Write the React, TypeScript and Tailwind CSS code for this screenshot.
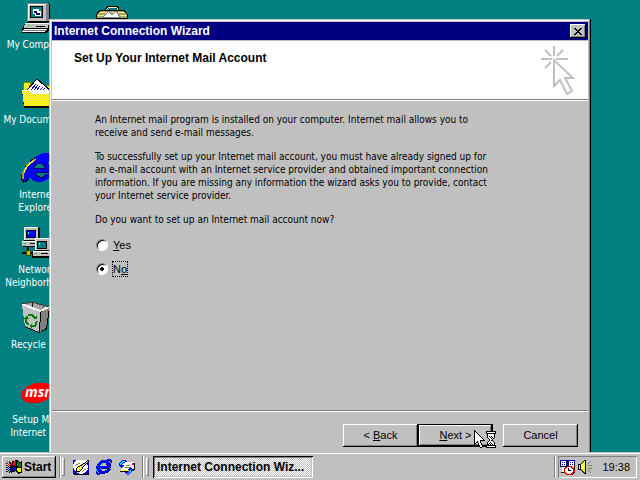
import { useState, type ReactNode } from 'react';
import { clsx } from 'clsx';

const COLORS: Record<string, string> = {
    K: '#000000',
    W: '#ffffff',
    L: '#c0c0c0',
    D: '#808080',
    R: '#ff0000',
    G: '#008000',
    B: '#0000ff',
    N: '#000080',
    Y: '#ffff00',
    O: '#808000',
    C: '#00ffff',
    T: '#008080',
};

// Each character is one pixel, a dot is transparent
function Sprite({ rows, className }: { rows: string[]; className?: string }) {
    return (
        <svg
            width={rows[0].length}
            height={rows.length}
            viewBox={`0 0 ${rows[0].length} ${rows.length}`}
            shapeRendering="crispEdges"
            className={clsx('shrink-0', className)}
            aria-hidden="true"
        >
            {rows.flatMap((row, y) =>
                [...row].map((c, x) =>
                    COLORS[c] ? <rect key={`${x}-${y}`} x={x} y={y} width="1" height="1" fill={COLORS[c]} /> : null
                )
            )}
        </svg>
    );
}

const FLAG = [
    '.........KKK....',
    '.R.R..KKRRKKK..K',
    '...KR.KRRRKGGKKK',
    'KR.RKRKRRRKGGGGK',
    '..R.RRKRRRKGGGGK',
    'KR.RKRKRRKKGGGGK',
    '..K.KKKKKKKKGGGK',
    'KB.BKBKBBBKKKKKK',
    '..B.BBKBBBKYYYYK',
    'KB.BKBKBBBKYYYYK',
    '..K.BBKBBKKYYYYK',
    'KB.BKKKKK.KKYYYK',
    '...K.K.....KKKKK',
    '............KK..',
];

const POINTER = [
    'K.......................',
    'KK..........KKKKKKKKKK..',
    'KWK.........KWWWWWWWWK..',
    'KWWK........KKKKKKKKKK..',
    'KWWWK........KWWWWWWK...',
    'KWWWWK.......KWWWWWWK...',
    'KWWWWWK......KWKWKWWK...',
    'KWWWWWWK.....KWWKWKWK...',
    'KWWWWWWWK.....KWWKWK....',
    'KWWWWWWWWK.....KWWK.....',
    'KWWWWWKKKKK....KWKK.....',
    'KWWKWWK.......KWWWWK....',
    'KWKKWWK......KWWKWWWK...',
    'KK..KWWK.....KWKWKWWK...',
    'K...KWWK.....KKWKWKWK...',
    '.....KWWK...KKKKKKKKKK..',
    '.....KWWK...KWWWWWWWWK..',
    '......KK....KKKKKKKKKK..',
];

const CLOSE = [
    'KK....KK',
    '.KK..KK.',
    '..KKKK..',
    '...KK...',
    '..KKKK..',
    '.KK..KK.',
    'KK....KK',
];

const SKETCH = [
    'BBBWWWWWWWWWWWKK',
    'BBWWWWWWWWWWWKYK',
    'BWWWWWWWWWWWKYKB',
    'BWWWWDDWWWKKLKBB',
    'WWWDDWWWDKLLKWBB',
    'WWDWWWWKKLLKWWWB',
    'WWWWWKKYYLKWWWWB',
    'WWWWKYYWYKWWWWWB',
    'BWWKYYWYYKWWWWDB',
    'BWWKYWYYKWWDDWWB',
    'BBWKYYYKWWDWWWBB',
    'NBBKKKKWWDWWWBBB',
    'NNBBWWWWWWWWBBBN',
    'NNNBBBWWWWBBBBNN',
    '.KKKKKKKKKKKKKKK',
];

const SMALL_E = [
    '...........BBBB.',
    '.....BBBBBBBNNBB',
    '....BBBBBBBBB.NB',
    '...BBBBNNBBBBB.B',
    '..BBBBC...BBBBB.',
    '.BBBBC....NBBBN.',
    '.BBBC......BBBB.',
    'BBBBBBBBBBBBBBB.',
    'BBBBBBBBBBBBBBN.',
    'BBBBCNNNNNNNNN..',
    'CBBBB......BBBN.',
    'CBBBBN...NBBBB..',
    'BCNBBBBBBBBBN...',
    'BB.NBBBBBBNN....',
    'BBBBBNNNN.......',
    '.BBB............',
];

const MAIL = [
    '...BBBB.........',
    '..BCCCBB........',
    '.BCCBBWWWWWWWWW.',
    'BCCBLWWWWWWWWRRK',
    'BCB.WWWWWWWWWRRK',
    'BBBBBWWDDDDWWWWK',
    '.BBB.WWWWWWWWWWK',
    '.LB.WWDDDDDBWWWK',
    '.LWWWWWWWWBBBWYK',
    '.LYWWWWWWBBBBBKK',
    '.LWYWYWYWYBCBBK.',
    '.KKKKKKKKBCCB...',
    '......BBBBCB....',
    '.......BCCB.....',
    '........BB......',
];

const SCHEDULE = [
    'NNNNNNNKNNNNNNN.',
    'NWWWWWNKNWWWWWN.',
    'NWNWNWNKNWNWNWN.',
    'NWWWWWNKNWWWWWK.',
    'NWNWNWNKNWNWNWK.',
    'NWWWWWNKKWWWWWK.',
    'NNNNNNKRRRRKWWK.',
    '.LWWWRRWWWWRRWK.',
    '.LWWRRWWKWWWRRK.',
    '.LWWRWWWKWWWWRK.',
    '.LWWRWWWKKKWWRR.',
    '.LWWRWWWWWWWWRR.',
    '.KKKRRWWWWWWRRK.',
    '.....RRWWWWRRK..',
    '......RRRRRRK...',
];

const SPEAKER = [
    '......KK......',
    '.....KYK....D.',
    '....KYYK...D..',
    '...KYWYK..D...',
    'KKKYWYYK......',
    'KYKWYYYK..DDDD',
    'KWKYYWYK......',
    'KYKYWYYK......',
    'KWKWYYYK..DDDD',
    'KKKOYYYK......',
    '...KOYYK..D...',
    '....KOYK...D..',
    '.....KOK....D.',
    '......KK......',
];

function Glyph({ children }: { children: ReactNode }) {
    return (
        <svg width="32" height="32" viewBox="0 0 32 32" shapeRendering="crispEdges" aria-hidden="true">
            {children}
        </svg>
    );
}

const computer = (
    <Glyph>
        <path d="M6 1h21l2 2v16l-2 2H6z" fill="#000" />
        <path d="M6 1h21v1H7v18H6z" fill="#808080" />
        <path d="M7 2h18v17H7z" fill="#c0c0c0" />
        <path d="M7 2h18v1H8v16H7z" fill="#fff" />
        <path d="M25 2h3v17h-3z" fill="#808080" />
        <path d="M9 4h13v12H9z" fill="#000" />
        <path d="M10 5h11v10H10z" fill="#008080" />
        <path d="M12 7h6v5h-6zM14 9h6v5h-6z" fill="#fff" />
        <path d="M13 9h3v2h-3zM15 11h4v2h-4z" fill="#000080" />
        <path d="M4 21h25v6l-4 4H1v-4z" fill="#000" />
        <path d="M4 21h24l-1 5H3z" fill="#c0c0c0" />
        <path d="M4 21h24v1H4z" fill="#fff" />
        <path d="M7 23h2v1H7z" fill="#0f0" />
        <path d="M15 24h9v1h-9z" fill="#000" />
        <path d="M3 27h23l-2 3H1z" fill="#fff" />
        <path d="M3 28h22v1H3z" fill="#808080" />
    </Glyph>
);

const briefcase = (
    <Glyph>
        <path d="M9 12V6l2-2h10l2 2v6h-2V7h-1V6h-8v1h-1v5z" fill="#000" />
        <path d="M10 12V7l2-2h8l2 2v4h-1V7l-1-1h-8l-1 1v5z" fill="#ff9" />
        <path d="M0 13l3-5h26l3 5v17H0z" fill="#000" />
        <path d="M1 13l3-4h24l3 4v16H1z" fill="#a8a860" />
        <path d="M3 10h26v1H3zM1 13h30v1H1z" fill="#e8e890" />
        <path d="M7 15l6-6 3 4 4-4 4 6z" fill="#fff" stroke="#808080" />
        <path d="M1 16h30v1H1z" fill="#000" />
    </Glyph>
);

const folder = (
    <Glyph>
        <defs>
            <pattern id="dither" width="2" height="2" patternUnits="userSpaceOnUse">
                <path d="M0 0h2v2H0z" fill="#ff0" />
                <path d="M0 0h1v1H0zM1 1h1v1H1z" fill="#f0e040" />
            </pattern>
        </defs>
        <path d="M2 28V7l2-2h5l2 3h19v20z" fill="url(#dither)" stroke="#808000" />
        <path d="M6 13L16 2l14 12v4H6z" fill="#fff" stroke="#000" />
        <path d="M10 13l5-6M13 13l4-5M16 13l3-4M19 13l3-3M22 13l2-2" stroke="#0000c0" />
        <path d="M1 13h8l3 3h19v13l-2 2H3z" fill="#000" />
        <path d="M1 13h8l3 3h17l-1 13H3z" fill="url(#dither)" />
        <path d="M1 13h8l3 3h17v1H11l-3-3H1z" fill="#fff" />
    </Glyph>
);

const explorer = (
    <Glyph>
        <path d="M18 3c5-3 11-3 12 0 1 3-1 6-3 8 2 2 3 5 3 9H14c0 6 9 7 11 2h5c-2 9-17 11-21 3-3 5-8 8-8 4 0-1 0-3 2-6L6 14C8 8 13 5 18 3z" fill="#00f" />
        <path d="M13 16c1-6 10-6 11 0z" fill="#008080" />
        <path d="M13 16c1-6 10-6 11 0zM29 20H14M25 22c-2 5-10 4-11-2" fill="none" stroke="#000060" />
        <path d="M16 5C5 11-1 22 1 28c1 3 4 2 7-1" fill="none" stroke="#000" />
        <path d="M15 7C6 12 0 21 2 27" fill="none" stroke="#c0a000" strokeWidth="2" />
        <path d="M13 8C8 12 4 16 3 21" fill="none" stroke="#ff6" />
    </Glyph>
);

const network = (
    <Glyph>
        <path d="M2 14h17v6H2zM3 0h14l2 2v12H3z" fill="#000" />
        <path d="M3 0h14v13H3z" fill="#c0c0c0" />
        <path d="M3 0h14v1H4v12H3z" fill="#fff" />
        <path d="M5 3h10v8H5z" fill="#000" />
        <path d="M6 4h8v6H6z" fill="#00f" />
        <path d="M7 5h1v2H7z" fill="#0ff" />
        <path d="M1 14h17v5H1z" fill="#c0c0c0" />
        <path d="M1 14h17v1H1z" fill="#fff" />
        <path d="M3 16h2v1H3z" fill="#0c0" />
        <path d="M9 16h6v1H9z" fill="#000" />
        <path d="M1 26h12M7 20v6" stroke="#000" strokeWidth="2" />
        <path d="M5 23h4v5H5z" fill="#c0c000" stroke="#404000" />
        <path d="M14 12h17v13H14zM11 24h21v7H11z" fill="#000" />
        <path d="M14 11h15v12H14z" fill="#c0c0c0" />
        <path d="M14 11h15v1H15v11h-1z" fill="#fff" />
        <path d="M16 14h10v8H16z" fill="#000" />
        <path d="M17 15h8v6h-8z" fill="#008080" />
        <path d="M18 16h1v2h-1z" fill="#0ff" />
        <path d="M12 24h18v5H12z" fill="#c0c0c0" />
        <path d="M12 24h18v1H12z" fill="#fff" />
        <path d="M14 26h2v1h-2z" fill="#0c0" />
        <path d="M20 26h7v1h-7z" fill="#000" />
    </Glyph>
);

const bin = (
    <Glyph>
        <path d="M1 2l11-2 17 5-3 22-8 4-14-6z" fill="#000" />
        <path d="M1 2l11-2 16 5-9 5z" fill="#808080" />
        <path d="M11 1v6l-7-4zM12 1l10 4-4 3-6-2z" fill="#a8a8a8" />
        <path d="M11 1h1v6h-1z" fill="#000" />
        <path d="M1 3l18 7-1 20-14-6z" fill="#c0c0c0" />
        <path d="M20 10l8-4-3 20-6 4z" fill="#808080" />
        <path d="M1 2l18 7 9-4" fill="none" stroke="#fff" strokeWidth="2" />
        <path d="M1 2l11-2 16 5" fill="none" stroke="#404040" />
        <path d="M7 13h4l3 3M5 16v4l3 3M10 24h4l2-5" fill="none" stroke="#008000" strokeWidth="2" />
        <path d="M12 17h4v-4zM3 17l3-4 2 4zM11 21v5l-3-2z" fill="#008000" />
    </Glyph>
);

const msn = (
    <Glyph>
        <ellipse cx="16" cy="16" rx="16" ry="10" transform="rotate(-14 16 16)" fill="#f00" />
        <text x="4" y="20" fill="#fff" className="font-['Open_Sans',sans-serif] text-[14px] font-bold italic">
            msn
        </text>
    </Glyph>
);

const SHORTCUTS = [
    { icon: computer, lines: ['My Computer'] },
    { icon: folder, lines: ['My Documents'] },
    { icon: explorer, lines: ['Internet', 'Explorer'] },
    { icon: network, lines: ['Network', 'Neighborhood'] },
    { icon: bin, lines: ['Recycle Bin'] },
    { icon: msn, lines: ['Setup MSN', 'Internet A...'] },
    { icon: briefcase, lines: [] },
];

const RAISED = 'bg-[#c0c0c0] shadow-[inset_-1px_-1px_#000,inset_1px_1px_#fff,inset_-2px_-2px_#808080]';
const BOLD = "font-['Liberation_Sans',Arial,sans-serif] text-[12px] font-bold";
const CONTROL = "font-['Liberation_Sans',Arial,sans-serif] text-[11px]";

function WizardButton({ children, isDefault }: { children: ReactNode; isDefault?: boolean }) {
    return (
        <button type="button" className={clsx('h-[23px] w-[75px] text-center', CONTROL, RAISED, isDefault && 'border border-black')}>
            {children}
        </button>
    );
}

interface ChoiceProps {
    value: string;
    current: string;
    onPick: (value: string) => void;
    children: ReactNode;
}

function Choice({ value, current, onPick, children }: ChoiceProps) {
    const checked = value === current;
    return (
        <label className={clsx('flex h-4 items-center gap-1', CONTROL)}>
            <input
                type="radio"
                name="setup-mail"
                value={value}
                checked={checked}
                onChange={() => onPick(value)}
                className="size-3 appearance-none rounded-full border border-t-[#808080] border-r-white border-b-white border-l-[#808080] bg-white shadow-[inset_1px_1px_#000] checked:bg-[radial-gradient(circle,#000_2px,#fff_2px)]"
            />
            <span className={clsx('border leading-[14px]', checked ? 'border-dotted border-black' : 'border-transparent')}>
                {children}
            </span>
        </label>
    );
}

function Wizard() {
    const [answer, setAnswer] = useState('no');

    return (
        <section className="absolute inset-x-[49px] top-[19px] -bottom-[9px] flex flex-col bg-[#c0c0c0] p-[3px] shadow-[inset_-1px_-1px_#000,inset_1px_1px_#c0c0c0,inset_-2px_-2px_#808080,inset_2px_2px_#fff]">
            <div className="flex h-[18px] shrink-0 items-center justify-between bg-[#000080] px-0.5">
                <h1 className={clsx(BOLD, 'text-white')}>Internet Connection Wizard</h1>
                <button type="button" aria-label="Close" className={clsx('flex h-[14px] w-4 items-center justify-center', RAISED)}>
                    <Sprite rows={CLOSE} />
                </button>
            </div>

            <header className="mt-px flex h-[59px] shrink-0 justify-between border-b border-[#808080] bg-white pr-3 pl-[22px]">
                <h2 className={clsx(BOLD, 'pt-2.5 leading-[14px]')}>Set Up Your Internet Mail Account</h2>
                <svg width="36" height="51" viewBox="0 0 36 51" className="mt-1" fill="none" stroke="#c0c0c0" strokeWidth="2" aria-hidden="true">
                    <path d="M14 1v10M1 14h11M16 14h12M5 5l6 6M23 5l-6 6M5 23l6-6" />
                    <path d="M14 15v26l6-6 7 14 5-3-7-13h8z" />
                </svg>
            </header>

            <div className="flex flex-1 flex-col gap-[11px] border-t border-white pt-3 pr-4 pl-[43px]">
                <p>
                    An Internet mail program is installed on your computer. Internet mail allows you to
                    <br />
                    receive and send e-mail messages.
                </p>
                <p>
                    To successfully set up your Internet mail account, you must have already signed up for
                    <br />
                    an e-mail account with an Internet service provider and obtained important connection
                    <br />
                    information. If you are missing any information the wizard asks you to provide, contact
                    <br />
                    your Internet service provider.
                </p>
                <p>Do you want to set up an Internet mail account now?</p>
                <div className="flex flex-col gap-2 pl-px">
                    <Choice value="yes" current={answer} onPick={setAnswer}>
                        <u>Y</u>es
                    </Choice>
                    <Choice value="no" current={answer} onPick={setAnswer}>
                        N<u>o</u>
                    </Choice>
                </div>
            </div>

            <footer className="flex shrink-0 justify-end border-t border-[#808080] pr-2.5 pb-[11px] shadow-[inset_0_1px_#fff]">
                <div className="flex pt-[13px]">
                    <WizardButton>
                        &lt; <u>B</u>ack
                    </WizardButton>
                    <div className="relative mr-2.5">
                        <WizardButton isDefault>
                            <u>N</u>ext &gt;
                        </WizardButton>
                        <Sprite rows={POINTER} className="pointer-events-none absolute top-1.5 left-14" />
                    </div>
                    <WizardButton>Cancel</WizardButton>
                </div>
            </footer>
        </section>
    );
}

function Divider() {
    return <div className="h-[22px] w-0.5 border-l border-[#808080] bg-white" />;
}

function Grip() {
    return <div className="h-[18px] w-[3px] bg-[#c0c0c0] shadow-[inset_-1px_-1px_#808080,inset_1px_1px_#fff]" />;
}

function Taskbar() {
    return (
        <footer className="flex h-7 shrink-0 items-center bg-[#c0c0c0] pt-1 pr-[3px] pb-0.5 pl-0.5 shadow-[inset_0_1px_#c0c0c0,inset_0_2px_#fff]">
            <button type="button" className={clsx('flex h-[22px] w-[54px] items-center gap-0.5 pl-1', BOLD, RAISED)}>
                <Sprite rows={FLAG} />
                Start
            </button>
            <div className="ml-[3px] flex items-center gap-px">
                <Divider />
                <Grip />
            </div>
            <nav className="ml-2 flex items-center gap-[7px]">
                <button type="button" aria-label="Show Desktop">
                    <Sprite rows={SKETCH} />
                </button>
                <button type="button" aria-label="Internet Explorer">
                    <Sprite rows={SMALL_E} />
                </button>
                <button type="button" aria-label="Outlook Express">
                    <Sprite rows={MAIL} />
                </button>
            </nav>
            <div className="mr-1 ml-[7px] flex items-center gap-0.5">
                <Divider />
                <Grip />
            </div>
            <button
                type="button"
                className={clsx(
                    'h-[22px] w-40 bg-[repeating-conic-gradient(#fff_0_25%,#c0c0c0_0_50%)] bg-[length:2px_2px] pl-1 text-left shadow-[inset_1px_1px_#000,inset_-1px_-1px_#fff,inset_2px_2px_#808080,inset_-2px_-2px_#c0c0c0]',
                    BOLD
                )}
            >
                Internet Connection Wiz...
            </button>
            <div className="ml-auto flex items-center gap-0.5">
                <Divider />
                <div className="flex h-[22px] items-center gap-0.5 pr-[7px] pl-0.5 shadow-[inset_1px_1px_#808080,inset_-1px_-1px_#fff]">
                    <Sprite rows={SCHEDULE} />
                    <Sprite rows={SPEAKER} />
                    <time className={clsx('pl-2', CONTROL)}>19:38</time>
                </div>
            </div>
        </footer>
    );
}

export default function App() {
    return (
        <div className="flex min-h-screen flex-col bg-[#008080] font-['DejaVu_Sans_Condensed','Liberation_Sans',sans-serif] text-[10px] leading-[13px] text-black">
            <main className="relative flex-1 overflow-hidden">
                <ul className="grid auto-cols-[74px] grid-flow-col grid-rows-[repeat(6,75px)] gap-x-px text-center text-white">
                    {SHORTCUTS.map(({ icon, lines }, i) => (
                        <li key={i} className="flex flex-col items-center gap-1 pt-0.5 whitespace-nowrap">
                            {icon}
                            <div>
                                {lines.map((line) => (
                                    <div key={line}>{line}</div>
                                ))}
                            </div>
                        </li>
                    ))}
                </ul>
                <Wizard />
            </main>
            <Taskbar />
        </div>
    );
}
